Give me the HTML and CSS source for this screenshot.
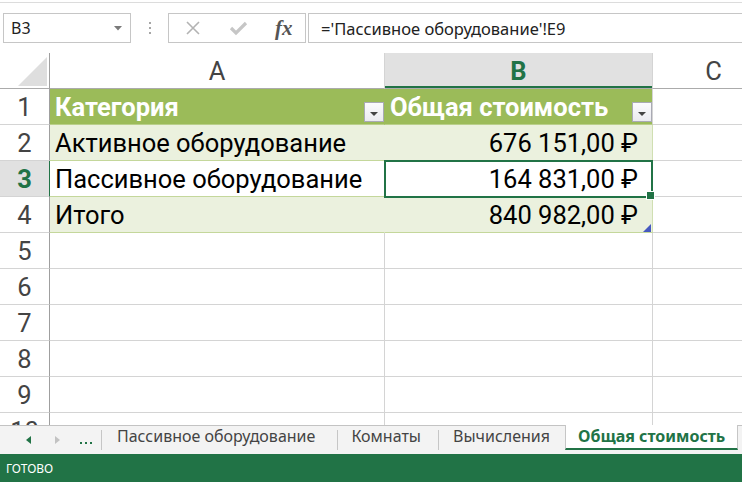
FILE: index.html
```html
<!DOCTYPE html>
<html lang="ru">
<head>
<meta charset="utf-8">
<title>Общая стоимость</title>
<link rel="stylesheet" href="styles.css">
</head>
<body>
<div class="app">
  <div class="fbar">
    <div class="topline"></div>
    <div class="fbar-row">
      <div class="namebox"><span>B3</span><svg class="caret" width="8" height="5" viewBox="0 0 8 5"><path d="M0 0H8L4 4.5Z" fill="#7a7a7a"/></svg></div>
      <div class="vdots"><i></i><i></i><i></i></div>
      <div class="fxbox">
        <svg class="ico-x" width="16" height="16" viewBox="0 0 16 16"><path d="M2 2L14 14M14 2L2 14" stroke="#b3b3b3" stroke-width="1.6" fill="none"/></svg>
        <svg class="ico-ok" width="19" height="16" viewBox="0 0 19 16"><path d="M2 8L7 13L17 3" stroke="#c6c6c6" stroke-width="3.2" fill="none"/></svg>
        <span class="fx">fx</span>
      </div>
      <div class="formula">='Пассивное оборудование'!E9</div>
    </div>
  </div>

  <div class="sheet">
    <div class="grid">
      <div class="cell corner"><svg width="49" height="35" viewBox="0 0 49 35"><path d="M18 33H47V4Z" fill="#dedede"/></svg></div>
      <div class="cell ch">A</div>
      <div class="cell ch sel">B</div>
      <div class="cell ch">C</div>

      <div class="cell rh">1</div>
      <div class="cell th a"><span>Категория</span><span class="filt"></span></div>
      <div class="cell th b"><span>Общая стоимость</span><span class="filt"></span></div>
      <div class="cell"></div>

      <div class="cell rh">2</div>
      <div class="cell tr band a">Активное оборудование</div>
      <div class="cell tr band b num">676 151,00 ₽</div>
      <div class="cell"></div>

      <div class="cell rh sel">3</div>
      <div class="cell tr a">Пассивное оборудование</div>
      <div class="cell tr b num cur">164 831,00 ₽</div>
      <div class="cell"></div>

      <div class="cell rh">4</div>
      <div class="cell tr band a">Итого</div>
      <div class="cell tr band b num end">840 982,00 ₽</div>
      <div class="cell"></div>

      <div class="cell rh">5</div><div class="cell"></div><div class="cell"></div><div class="cell"></div>
      <div class="cell rh">6</div><div class="cell"></div><div class="cell"></div><div class="cell"></div>
      <div class="cell rh">7</div><div class="cell"></div><div class="cell"></div><div class="cell"></div>
      <div class="cell rh">8</div><div class="cell"></div><div class="cell"></div><div class="cell"></div>
      <div class="cell rh">9</div><div class="cell"></div><div class="cell"></div><div class="cell"></div>
      <div class="cell rh">10</div><div class="cell"></div><div class="cell"></div><div class="cell"></div>
    </div>
  </div>

  <div class="tabs">
    <div class="nav">
      <svg width="101" height="20" viewBox="0 0 101 20">
        <path d="M31 6V14L26 10Z" fill="#217346"/>
        <path d="M55 6V14L60 10Z" fill="#c2c2c2"/>
        <rect x="80" y="12" width="2" height="2" fill="#217346"/>
        <rect x="85" y="12" width="2" height="2" fill="#217346"/>
        <rect x="90" y="12" width="2" height="2" fill="#217346"/>
      </svg>
    </div>
    <div class="tab first">Пассивное оборудование</div>
    <div class="tab">Комнаты</div>
    <div class="tab last">Вычисления</div>
    <div class="tab active">Общая стоимость</div>
  </div>

  <div class="status">ГОТОВО</div>
</div>
</body>
</html>
```

FILE: styles.css
```css
* { box-sizing: border-box; }
html, body { margin: 0; padding: 0; }
body {
  width: 742px;
  height: 482px;
  overflow: hidden;
  background: #fff;
  font-family: "Noto Sans", "Open Sans", sans-serif;
}
.app {
  display: flex;
  flex-direction: column;
  width: 742px;
  height: 482px;
  overflow: hidden;
}

/* formula bar */
.fbar {
  flex: 0 0 53px;
  display: flex;
  flex-direction: column;
  background: #fff;
}
.topline {
  height: 1px;
  margin-top: 2px;
  background: #dcdcdc;
}
.fbar-row {
  margin-top: 10px;
  height: 30px;
  display: flex;
}
.namebox {
  margin-left: 3px;
  width: 128px;
  height: 30px;
  border: 1px solid #c6c6c6;
  display: flex;
  align-items: center;
  justify-content: space-between;
  padding: 0 8px 0 7px;
  font-size: 16px;
  color: #222;
}
.caret { margin-top: 1px; }
.vdots {
  width: 37px;
  display: flex;
  flex-direction: column;
  align-items: center;
  justify-content: center;
  gap: 3px;
}
.vdots i {
  display: block;
  width: 2px;
  height: 2px;
  background: #a6a6a6;
}
.fxbox {
  width: 138px;
  height: 30px;
  border: 1px solid #c6c6c6;
  display: flex;
  align-items: center;
  padding-left: 16px;
}
.ico-ok { margin-left: 28px; }
.fx {
  margin-left: 27px;
  font-family: "Liberation Serif", serif;
  font-style: italic;
  font-weight: bold;
  font-size: 21px;
  color: #555;
  line-height: 1;
}
.formula {
  flex: 1;
  margin-left: 2px;
  margin-right: -2px;
  height: 30px;
  border: 1px solid #c6c6c6;
  display: flex;
  align-items: center;
  padding-left: 12px;
  font-size: 16.5px;
  color: #222;
  white-space: nowrap;
}

/* sheet */
.sheet {
  flex: 1 1 auto;
  min-height: 0;
  overflow: hidden;
}
.grid {
  display: grid;
  grid-template-columns: 50px 335px 268px 122px;
  grid-auto-rows: 36px;
  width: 775px;
}
.cell {
  border-right: 1px solid #d4d4d4;
  border-bottom: 1px solid #d4d4d4;
  display: flex;
  align-items: center;
  padding: 0 5px;
  font-family: Roboto, "Liberation Sans", sans-serif;
  font-size: 25.5px;
  color: #000;
  white-space: nowrap;
  overflow: hidden;
}
.corner {
  padding: 0;
  border-right-color: #9f9f9f;
  border-bottom-color: #ababab;
}
.corner svg { display: block; }
.ch {
  justify-content: center;
  color: #444;
  border-bottom-color: #ababab;
}
.ch.sel {
  background: #e1e1e1;
  color: #217346;
  font-weight: bold;
  box-shadow: inset 0 -2px 0 #217346;
}
.rh {
  justify-content: center;
  padding: 0;
  color: #444;
  border-right-color: #9f9f9f;
}
.rh.sel {
  background: #e1e1e1;
  color: #217346;
  font-weight: bold;
  border-right-color: #217346;
}

/* table */
.th {
  background: #9bbb59;
  color: #fff;
  font-weight: bold;
  padding-right: 0;
  border-bottom-color: #b9cf8a;
}
.th.a { border-right-color: #9bbb59; }
.filt {
  margin-left: auto;
  align-self: flex-end;
  margin-bottom: 2px;
  width: 20px;
  height: 20px;
  flex: 0 0 20px;
  border: 1px solid #a9aab4;
  background: linear-gradient(#fbfbfd, #ebebf0);
  display: flex;
  align-items: center;
  justify-content: center;
}
.filt::after {
  content: "";
  margin-top: 3px;
  border-left: 4px solid transparent;
  border-right: 4px solid transparent;
  border-top: 4px solid #444;
}
.tr { border-bottom-color: #c4d79b; }
.band { background: #ebf1de; }
.band.a { border-right-color: #ebf1de; }
.tr.a { border-right-color: transparent; }
.band.b { border-right-color: #d0dfb2; }
.num {
  justify-content: flex-end;
  padding-right: 14px;
}
.cur {
  position: relative;
  z-index: 2;
  overflow: visible;
}
.cur::before {
  content: "";
  position: absolute;
  top: -1px;
  left: -1px;
  right: -1px;
  bottom: -2px;
  border: 2px solid #217346;
}
.cur::after {
  content: "";
  position: absolute;
  right: -3px;
  bottom: -4px;
  width: 7px;
  height: 7px;
  background: #217346;
  border: 1px solid #fff;
}
.end { position: relative; }
.end::after {
  content: "";
  position: absolute;
  right: 1px;
  bottom: 0;
  width: 8px;
  height: 8px;
  background: #4659c0;
  clip-path: polygon(100% 0, 100% 100%, 0 100%);
}

/* sheet tabs */
.tabs {
  flex: 0 0 29px;
  display: flex;
  align-items: flex-start;
  background: #f3f3f3;
  border-top: 1px solid #c3c3c3;
}
.nav {
  width: 102px;
  height: 20px;
  margin-top: 4px;
  border-right: 1px solid #c6c6c6;
}
.nav svg { display: block; }
.tab {
  height: 20px;
  margin-top: 4px;
  padding: 0 17px 0 13px;
  border-right: 1px solid #c6c6c6;
  line-height: 12px;
  font-size: 16px;
  color: #444;
  white-space: nowrap;
}
.tab.first { padding: 0 22px 0 15px; }
.tab.last { border-right: none; padding: 0 15px 0 14px; }
.tab.active {
  height: 25px;
  margin-top: -1px;
  background: #fff;
  border-left: 1px solid #c6c6c6;
  border-right: 1px solid #c6c6c6;
  border-bottom: 2px solid #217346;
  padding: 0 12px;
  line-height: 23px;
  color: #217346;
  font-weight: bold;
}

/* status bar */
.status {
  flex: 0 0 28px;
  background: #217346;
  color: #fff;
  font-size: 12px;
  padding-left: 6px;
  display: flex;
  align-items: center;
}
```
